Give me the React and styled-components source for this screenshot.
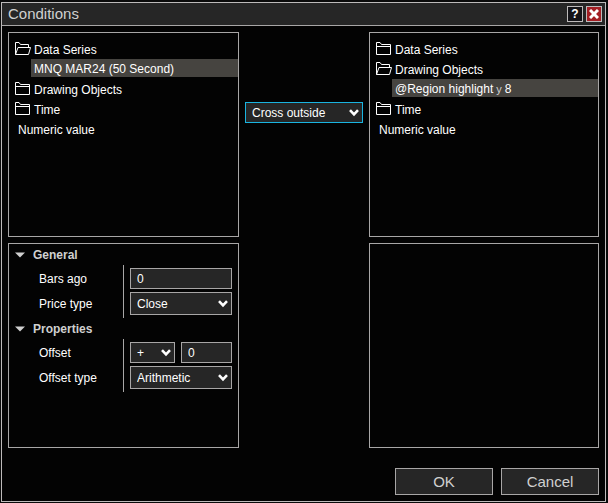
import React from 'react'
import styled, { createGlobalStyle, css } from 'styled-components'

const colors = {
  page: '#0a0a0a',
  window: '#030303',
  bar: '#262626',
  line: '#a8a6a6',
  frame: '#bdbaba',
  accent: '#1ab4e0',
  selected: '#464440',
  close: '#a31f24',
  text: '#ffffff',
  muted: '#d0d0d0',
}

const GlobalStyle = createGlobalStyle`
  * {
    box-sizing: border-box;
  }
  body {
    margin: 0;
    background: ${colors.page};
    color: ${colors.text};
    font-family: 'Liberation Sans', Arial, sans-serif;
    font-size: 12px;
  }
  button, input, select {
    margin: 0;
    font-family: inherit;
    font-size: 12px;
    color: inherit;
    border-radius: 0;
    outline: none;
  }
`

const Page = styled.div`
  display: flex;
  min-height: 100vh;
  padding: 2px 2px 1px 1px;
`
const Dialog = styled.section`
  display: flex;
  flex-direction: column;
  flex: 1;
  border: 1px solid ${colors.frame};
  background: ${colors.window};
`
const TitleBar = styled.header`
  display: flex;
  align-items: center;
  gap: 3px;
  height: 23px;
  padding: 0 3px 0 6px;
  border-bottom: 1px solid ${colors.line};
  background: ${colors.bar};
`
const Title = styled.h1`
  flex: 1;
  margin: 0;
  font-size: 15px;
  font-weight: normal;
  line-height: 22px;
  color: ${colors.muted};
`
const TitleButton = styled.button`
  display: flex;
  justify-content: center;
  align-items: center;
  width: 16px;
  height: 16px;
  padding: 0;
  border: 1px solid ${colors.frame};
  background: ${props => (props.$danger ? colors.close : '#141418')};
  font-weight: bold;
  line-height: 14px;
`
const Content = styled.main`
  display: grid;
  flex: 1;
  grid-template-columns: 231fr 118px 230fr;
  grid-template-rows: 1fr 1fr;
  gap: 6px;
  padding: 6px 6px 0;
`
const Panel = styled.div`
  border: 1px solid ${colors.line};
`
const Operator = styled.div`
  padding-top: 70px;
`
const Tree = styled.ul`
  margin: 0;
  padding: 6px 0;
  list-style: none;
`
const TreeRow = styled.li`
  display: flex;
  gap: 3px;
  height: 20px;
  padding-left: 6px;
  line-height: 22px;
  white-space: pre;

  svg {
    margin-top: 3px;
  }
  ${props => props.$leaf && css`
    padding-left: 9px;
  `}
  ${props => props.$selected && css`
    height: 18px;
    margin: 0 0 2px 22px;
    padding-left: 3px;
    line-height: 20px;
    background: ${colors.selected};
  `}
`
const SmallGlyph = styled.span`
  font-size: 11px;
  color: ${colors.muted};
`
const GroupHeader = styled.h2`
  display: flex;
  align-items: center;
  gap: 8px;
  height: 21px;
  margin: 0;
  padding-left: 6px;
  font-size: 12px;
  font-weight: bold;
  color: ${colors.muted};
`
const Group = styled.div`
  display: grid;
  grid-template-columns: 84px 1fr;
  padding: 0 6px 0 30px;
`
const Labels = styled.div`
  display: grid;
  grid-template-rows: 21px 23px;
  row-gap: 3px;
  align-items: center;
  padding: 3px 0;
`
const Fields = styled.div`
  display: grid;
  grid-template-rows: 21px 23px;
  row-gap: 3px;
  padding: 3px 0 3px 6px;
  border-left: 1px solid ${colors.line};
`
const Pair = styled.div`
  display: grid;
  grid-template-columns: 45px 1fr;
  gap: 6px;
`
const Input = styled.input`
  width: 100%;
  min-width: 0;
  height: 100%;
  padding: 0 6px;
  border: 1px solid ${colors.line};
  background: ${colors.bar};
`
const SelectBox = styled.div`
  position: relative;
  height: ${props => (props.$tall ? '23px' : '21px')};

  svg {
    position: absolute;
    top: 50%;
    right: 4px;
    margin-top: -4px;
    pointer-events: none;
  }
`
const NativeSelect = styled.select`
  width: 100%;
  height: 100%;
  padding: 0 16px 0 6px;
  border: 1px solid ${props => (props.$active ? colors.accent : colors.line)};
  background: ${colors.bar};
  appearance: none;
`
const Footer = styled.footer`
  display: flex;
  justify-content: flex-end;
  gap: 8px;
  padding: 20px 6px 6px;
`
const FooterButton = styled.button`
  width: 98px;
  height: 27px;
  padding: 0;
  border: 1px solid ${colors.line};
  background: ${colors.bar};
  font-size: 15px;
  color: ${colors.muted};
`

const FolderIcon = ({ open }) => (
  <svg width="16" height="14" viewBox="0 0 16 14" fill="none" stroke="#fff" aria-hidden="true">
    {open ? (
      <path d="M0.5 12.5V0.5H4L5.5 2.5H13.5V5M0.5 12.5L3 5.5H15.5L13.5 12.5Z" />
    ) : (
      <path d="M0.5 12.5V0.5H4L5.5 2.5H14.5V12.5ZM0.5 4.5H14.5" />
    )}
  </svg>
)

const Triangle = () => (
  <svg width="10" height="6" viewBox="0 0 10 6" aria-hidden="true">
    <path d="M0 0.5H10L5 5.5Z" fill="#d0d0d0" />
  </svg>
)

const Select = ({ id, value, tall, active, label }) => (
  <SelectBox $tall={tall}>
    <NativeSelect id={id} defaultValue={value} aria-label={label} $active={active}>
      <option>{value}</option>
    </NativeSelect>
    <svg width="10" height="8" viewBox="0 0 10 8" fill="none" stroke="#fff" strokeWidth="2.6" aria-hidden="true">
      <path d="M1 1.2L5 5.4L9 1.2" />
    </svg>
  </SelectBox>
)

const Folder = ({ open, children }) => (
  <TreeRow>
    <FolderIcon open={open} />
    {children}
  </TreeRow>
)

const App = () => (
  <Page>
    <GlobalStyle />
    <Dialog role="dialog" aria-labelledby="title">
      <TitleBar>
        <Title id="title">Conditions</Title>
        <TitleButton type="button">?</TitleButton>
        <TitleButton type="button" aria-label="Close" $danger>
          <svg width="10" height="10" viewBox="0 0 10 10" stroke="#fff" strokeWidth="3" aria-hidden="true">
            <path d="M1 1L9 9M9 1L1 9" />
          </svg>
        </TitleButton>
      </TitleBar>
      <Content>
        <Panel>
          <Tree>
            <Folder open>Data Series</Folder>
            <TreeRow $selected>MNQ MAR24 (50 Second)</TreeRow>
            <Folder>Drawing Objects</Folder>
            <Folder>Time</Folder>
            <TreeRow $leaf>Numeric value</TreeRow>
          </Tree>
        </Panel>
        <Operator>
          <Select label="Operator" value="Cross outside" active />
        </Operator>
        <Panel>
          <Tree>
            <Folder>Data Series</Folder>
            <Folder open>Drawing Objects</Folder>
            <TreeRow $selected>
              @Region highlight
              <SmallGlyph>y</SmallGlyph>
              8
            </TreeRow>
            <Folder>Time</Folder>
            <TreeRow $leaf>Numeric value</TreeRow>
          </Tree>
        </Panel>
        <Panel>
          <GroupHeader><Triangle />General</GroupHeader>
          <Group>
            <Labels>
              <label htmlFor="bars-ago">Bars ago</label>
              <label htmlFor="price-type">Price type</label>
            </Labels>
            <Fields>
              <Input id="bars-ago" defaultValue="0" />
              <Select id="price-type" value="Close" tall />
            </Fields>
          </Group>
          <GroupHeader><Triangle />Properties</GroupHeader>
          <Group>
            <Labels>
              <label htmlFor="offset">Offset</label>
              <label htmlFor="offset-type">Offset type</label>
            </Labels>
            <Fields>
              <Pair>
                <Select label="Offset sign" value="+" />
                <Input id="offset" defaultValue="0" />
              </Pair>
              <Select id="offset-type" value="Arithmetic" tall />
            </Fields>
          </Group>
        </Panel>
        <div />
        <Panel />
      </Content>
      <Footer>
        <FooterButton type="button">OK</FooterButton>
        <FooterButton type="button">Cancel</FooterButton>
      </Footer>
    </Dialog>
  </Page>
)

export default App
